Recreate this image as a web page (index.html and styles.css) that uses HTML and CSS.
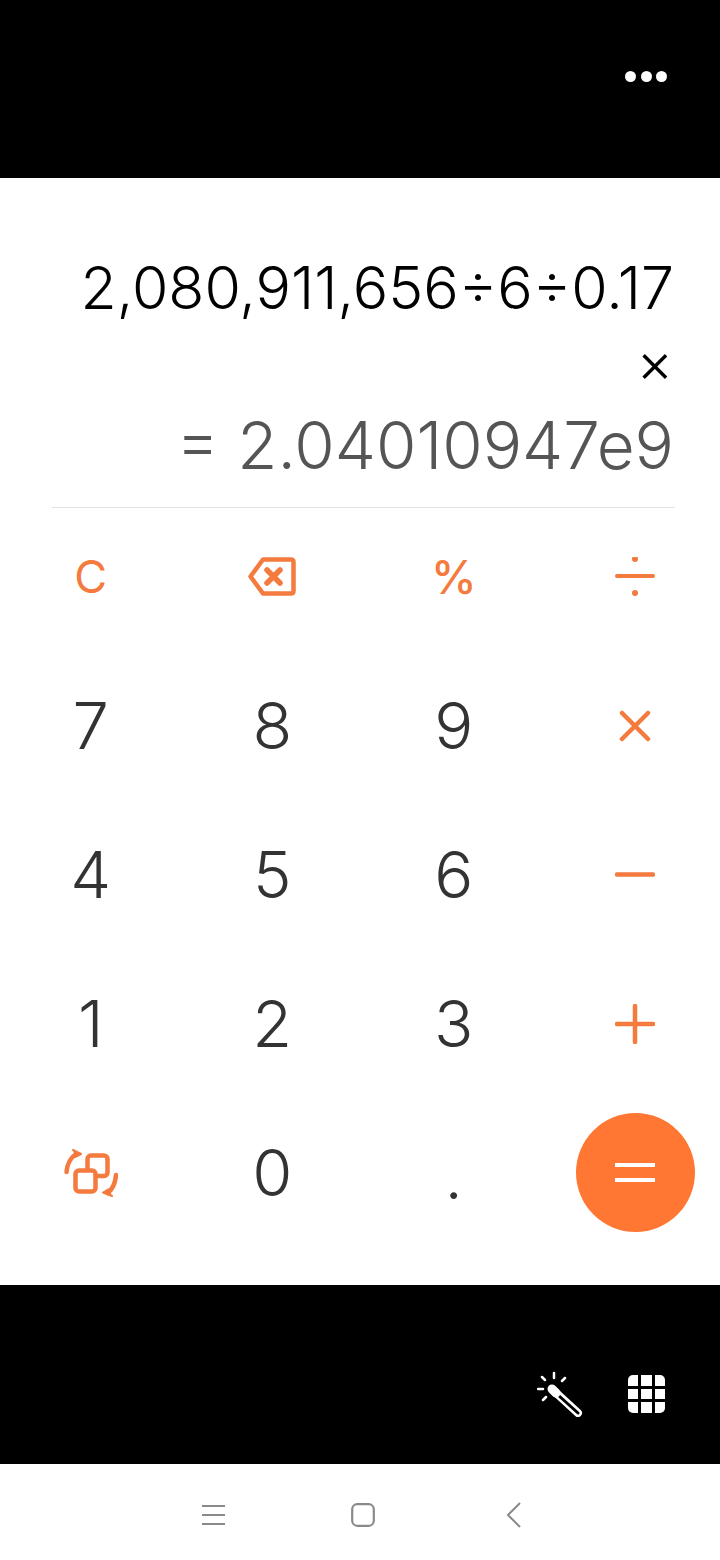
FILE: index.html
```html
<!DOCTYPE html>
<html lang="en">
<head>
    <meta charset="UTF-8">
    <title>Calculator</title>
    <link rel="stylesheet" href="styles.css">
</head>
<body>
    <div class="top-bar">
        <div class="more-dots">
            <span></span><span></span><span></span>
        </div>
    </div>

    <div class="calculator">
        <div class="display">
            <div class="expression">2,080,911,656÷6÷0.17</div>
            <div class="operator-line">×</div>
            <div class="result">= 2.04010947e9</div>
        </div>

        <div class="keypad">
            <div class="key key-op key-clear">C</div>
            <div class="key">
                <svg class="icon" width="48" height="39" viewBox="0 0 48 39" fill="none" stroke="#f47a3e" stroke-width="4.5" stroke-linejoin="round" stroke-linecap="round">
                    <path d="M15 2.5H43Q45.5 2.5 45.5 5V34Q45.5 36.5 43 36.5H15L2.5 19.5Z"/>
                    <path d="M19 13L32 26M32 13L19 26" stroke-width="5.5"/>
                </svg>
            </div>
            <div class="key key-op key-percent">%</div>
            <div class="key">
                <svg class="icon" width="40" height="40" viewBox="0 0 40 40" fill="#f47a3e">
                    <rect x="0" y="17" width="40" height="4" rx="2"/>
                    <circle cx="20" cy="2" r="3"/>
                    <circle cx="20" cy="36" r="3"/>
                </svg>
            </div>

            <div class="key">7</div>
            <div class="key">8</div>
            <div class="key">9</div>
            <div class="key">
                <svg class="icon" width="32" height="32" viewBox="0 0 32 32" stroke="#f47a3e" stroke-width="4.5" stroke-linecap="round">
                    <path d="M3 3L29 29M29 3L3 29"/>
                </svg>
            </div>

            <div class="key">4</div>
            <div class="key">5</div>
            <div class="key">6</div>
            <div class="key">
                <svg class="icon" width="40" height="5" viewBox="0 0 40 5" stroke="#f47a3e" stroke-width="4.5" stroke-linecap="round">
                    <path d="M2 2.5H38"/>
                </svg>
            </div>

            <div class="key">1</div>
            <div class="key">2</div>
            <div class="key">3</div>
            <div class="key">
                <svg class="icon" width="40" height="40" viewBox="0 0 40 40" stroke="#f47a3e" stroke-width="4.5" stroke-linecap="round">
                    <path d="M2 20H38M20 2V38"/>
                </svg>
            </div>

            <div class="key">
                <svg class="icon" width="54" height="48" viewBox="0 0 54 48" fill="none" stroke="#f47a3e" stroke-width="4.5" stroke-linecap="round" stroke-linejoin="round">
                    <rect x="23.5" y="6.5" width="20" height="20.5" rx="3.5"/>
                    <rect x="11.5" y="21.5" width="20" height="21" rx="3.5" fill="#fff"/>
                    <path d="M2.5 23Q3.5 11 12 5"/>
                    <path d="M9 1L17 5L11 8" fill="#f47a3e" stroke-width="2"/>
                    <path d="M52 26Q51 38 44 44"/>
                    <path d="M48 47L39 43.5L45 40" fill="#f47a3e" stroke-width="2"/>
                </svg>
            </div>
            <div class="key">0</div>
            <div class="key key-dot">.</div>
            <div class="key">
                <div class="equals-btn"><span></span><span></span></div>
            </div>
        </div>
    </div>

    <div class="tool-bar">
        <svg class="icon" width="46" height="46" viewBox="0 0 46 46" fill="none" stroke="#fff" stroke-linecap="round">
            <path d="M17 2V7M5 6L8 9M28 7L25 10M1 18H6M9 26L6 29" stroke-width="2.5"/>
            <path d="M16 19L41 42" stroke-width="8"/>
            <path d="M21 24L41 42" stroke="#000" stroke-width="3"/>
            <path d="M15 18L19 22" stroke-width="9"/>
        </svg>
        <div class="grid-icon">
            <span></span><span></span><span></span>
            <span></span><span></span><span></span>
            <span></span><span></span><span></span>
        </div>
    </div>

    <div class="nav-bar">
        <svg class="icon" width="23" height="22" viewBox="0 0 23 22" stroke="#8a8a8a" stroke-width="2">
            <path d="M0 2H23M0 11H23M0 20H23"/>
        </svg>
        <svg class="icon" width="24" height="24" viewBox="0 0 24 24" fill="none" stroke="#8a8a8a" stroke-width="2.2">
            <rect x="1.2" y="1.2" width="21.6" height="21.6" rx="5"/>
        </svg>
        <svg class="icon" width="15" height="26" viewBox="0 0 15 26" fill="none" stroke="#8a8a8a" stroke-width="2">
            <path d="M14 1L2 13L14 25"/>
        </svg>
    </div>
</body>
</html>
```

FILE: styles.css
```css
body {
    font-family: Inter, Arial, sans-serif;
    margin: 0;
    background: #fff;
}
.icon {
    display: block;
}
.top-bar {
    background: #000;
    height: 178px;
    display: flex;
    justify-content: flex-end;
    box-sizing: border-box;
    padding: 71px 53px 0 0;
}
.more-dots {
    display: flex;
    gap: 4.5px;
    height: 11px;
}
.more-dots span {
    width: 11px;
    height: 11px;
    border-radius: 50%;
    background: #fff;
}
.calculator {
    height: 1107px;
    overflow: hidden;
}
.display {
    height: 330px;
    box-sizing: border-box;
    margin: 0 45px 0 52px;
    padding-top: 72px;
    border-bottom: 1px solid #e2e2e2;
    text-align: right;
    font-weight: 350;
}
.expression {
    font-size: 59px;
    line-height: 76px;
    color: #000;
    padding-right: 1px;
    white-space: nowrap;
}
.operator-line {
    font-size: 56px;
    line-height: 72px;
    color: #000;
    padding-right: 2px;
}
.result {
    font-size: 65.5px;
    line-height: 96px;
    color: #555;
    padding-right: 1px;
    white-space: nowrap;
}
.keypad {
    display: grid;
    grid-template-columns: repeat(4, 181.5px);
    grid-auto-rows: 149px;
    margin-top: -6px;
}
.key {
    display: flex;
    align-items: center;
    justify-content: center;
    font-size: 65px;
    font-weight: 350;
    color: #333;
}
.key-op {
    color: #f47a3e;
    font-weight: 400;
}
.key-clear {
    font-size: 45px;
}
.key-percent {
    font-size: 46px;
    font-weight: 500;
}
.key-dot {
    padding-top: 6px;
}
.equals-btn {
    width: 119px;
    height: 119px;
    border-radius: 50%;
    background: #ff7733;
    display: flex;
    flex-direction: column;
    align-items: center;
    justify-content: center;
    gap: 11px;
}
.equals-btn span {
    width: 40px;
    height: 4px;
    background: #fff;
}
.tool-bar {
    background: #000;
    height: 179px;
    box-sizing: border-box;
    display: flex;
    justify-content: flex-end;
    align-items: center;
    gap: 45px;
    padding: 39px 55px 0 0;
}
.grid-icon {
    display: grid;
    grid-template-columns: repeat(3, 10.5px);
    grid-auto-rows: 10.5px;
    gap: 3px;
    border-radius: 5px;
    overflow: hidden;
}
.grid-icon span {
    background: #fff;
}
.nav-bar {
    height: 96px;
    background: #fff;
    display: grid;
    grid-template-columns: repeat(3, 150px);
    justify-items: center;
    align-items: center;
    padding: 6px 0 0 138px;
    box-sizing: border-box;
}
```
